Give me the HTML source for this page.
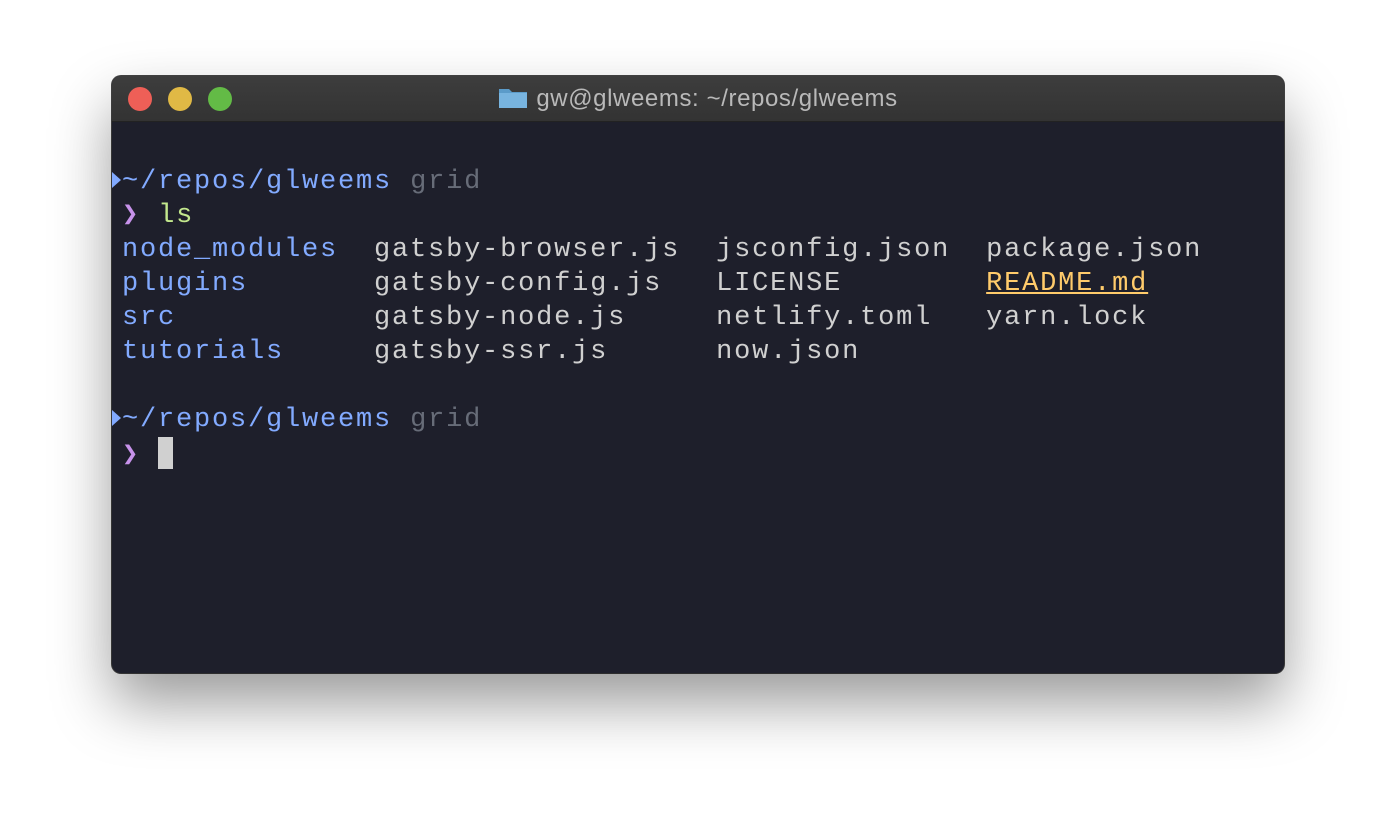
<!DOCTYPE html>
<html><head><style>
html,body{margin:0;padding:0;background:#fff;width:1396px;height:822px;overflow:hidden}
.win{position:absolute;left:112px;top:76px;width:1172px;height:597px;border-radius:9px;background:#1e1f2b;box-shadow:0 30px 60px rgba(0,0,0,.4),0 0 0 1px #444;overflow:hidden}
.tb{height:45px;background:linear-gradient(#3d3d3d,#333);border-bottom:1px solid #222;position:relative}
.d{position:absolute;top:11px;width:24px;height:24px;border-radius:50%}
.title{position:absolute;left:0;right:0;top:9px;text-align:center;font:24px "Liberation Sans",sans-serif;letter-spacing:0.6px;color:#b9b9b9}
.term{position:absolute;left:10px;top:89px;font:27px/34px "Liberation Mono",monospace;letter-spacing:1.8px;color:#d0d0d0;white-space:pre;margin:0}
.b{color:#82aaff}.g{color:#676c78}.gr{color:#c3e88d}.p{color:#c792ea}.y{color:#ffcb6b;text-decoration:underline}
.arr{position:absolute;left:0;width:0;height:0;border-top:8px solid transparent;border-bottom:8px solid transparent;border-left:9px solid #82aaff}
.cur{display:inline-block;width:15px;height:32px;background:#d0d0d0;vertical-align:-7px}
</style></head><body>
<div class="win">
<div class="tb">
<div class="d" style="left:16px;background:#ee5f57"></div>
<div class="d" style="left:56px;background:#e0b945"></div>
<div class="d" style="left:96px;background:#63bb46"></div>
<div class="title"><svg width="30" height="22" viewBox="0 0 30 22" style="vertical-align:-3px;margin-right:8px"><path d="M1 2h10l3 3h15v16H1z" fill="#5b9bc9"/><path d="M1 6h28v15H1z" fill="#78b4df"/></svg>gw@glweems: ~/repos/glweems</div>
</div>
<div class="arr" style="top:96px"></div>
<div class="arr" style="top:334px"></div>
<pre class="term"><span class="b">~/repos/glweems</span> <span class="g">grid</span>
<span class="p">❯</span> <span class="gr">ls</span>
<span class="b">node_modules</span>  gatsby-browser.js  jsconfig.json  package.json
<span class="b">plugins</span>       gatsby-config.js   LICENSE        <span class="y">README.md</span>
<span class="b">src</span>           gatsby-node.js     netlify.toml   yarn.lock
<span class="b">tutorials</span>     gatsby-ssr.js      now.json

<span class="b">~/repos/glweems</span> <span class="g">grid</span>
<span class="p">❯</span> <span class="cur"></span></pre>
</div>
</body></html>
